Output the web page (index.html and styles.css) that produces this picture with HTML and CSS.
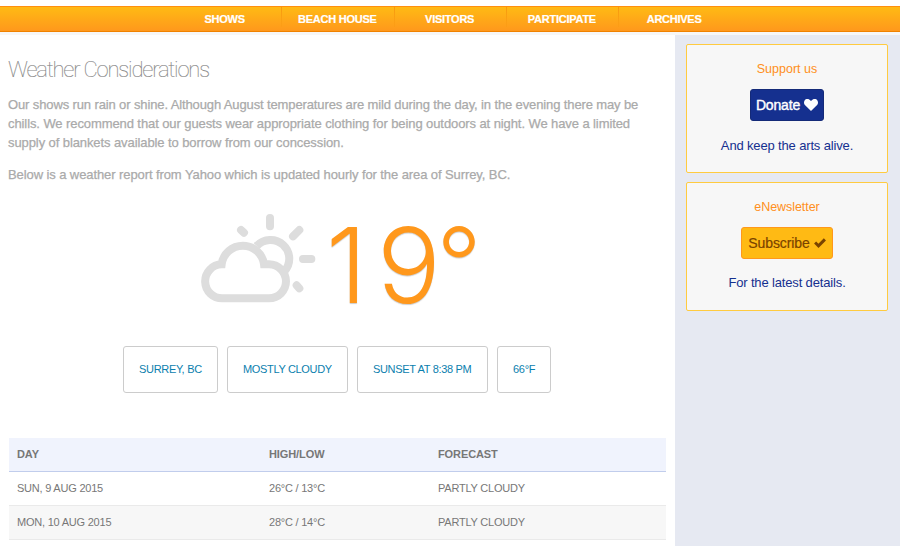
FILE: index.html
```html
<!DOCTYPE html>
<html lang="en">
<head>
<meta charset="utf-8">
<title>Weather Considerations</title>
<link rel="stylesheet" href="styles.css">
</head>
<body>
<nav class="nav">
  <a>SHOWS</a><a>BEACH HOUSE</a><a>VISITORS</a><a>PARTICIPATE</a><a>ARCHIVES</a>
</nav>
<div class="page">
  <main class="main">
    <h1>Weather Considerations</h1>
    <p class="intro">Our shows run rain or shine. Although August temperatures are mild during the day, in the evening there may be<br><span class="wide">chills. We recommend that our guests wear appropriate clothing for being outdoors at night. We have a limited<br>supply of blankets available to borrow from our concession.</span></p>
    <p class="wide">Below is a weather report from Yahoo which is updated hourly for the area of Surrey, BC.</p>
    <div class="now">
      <svg class="weather" viewBox="30 20 345 275" fill="none" stroke="#ddd" stroke-width="24">
        <path d="M95 279 H234 A51 51 0 0 0 234 177 H219 A64 64 0 0 0 92 177 A51 51 0 0 0 95 279 Z"/>
        <path d="M197 122 A56 56 0 0 1 280 198"/>
        <path stroke-linecap="round" d="M237 38V63M150 74L159 82M325 74L306 93M336 161H361M317 240L325 249"/>
      </svg>
      <span class="temp"><span class="tens">1</span><span class="ones">9</span><span class="deg">°</span></span>
    </div>
    <ul class="facts">
      <li class="place">SURREY, BC</li><li class="sky">MOSTLY CLOUDY</li><li class="sunset">SUNSET AT 8:38 PM</li><li class="fahrenheit">66°F</li>
    </ul>
    <table>
      <thead><tr><th class="day">DAY</th><th class="range">HIGH/LOW</th><th>FORECAST</th></tr></thead>
      <tbody>
        <tr><td>SUN, 9 AUG 2015</td><td>26°C / 13°C</td><td>PARTLY CLOUDY</td></tr>
        <tr><td>MON, 10 AUG 2015</td><td>28°C / 14°C</td><td>PARTLY CLOUDY</td></tr>
      </tbody>
    </table>
  </main>
  <aside class="side">
    <section class="card">
      <h2>Support us</h2>
      <a class="btn donate">Donate <svg viewBox="0 0 14 12" width="14" height="12"><path fill="#fff" d="M7 12 .9 6.1C-.3 4.8-.2 2.500 .6 1.400 2-.5 5-.5 7 2.100 9-.5 12-.5 13.400 1.400 14.200 2.500 14.300 4.800 13.100 6.100Z"/></svg></a>
      <p>And keep the arts alive.</p>
    </section>
    <section class="card second">
      <h2>eNewsletter</h2>
      <a class="btn subscribe">Subscribe <svg viewBox="0 0 12 10" width="12" height="10"><path fill="none" stroke="#7a4300" stroke-width="3" d="M1.100 4.500 4.500 7.800 10.900 1.400"/></svg></a>
      <p>For the latest details.</p>
    </section>
  </aside>
</div>
</body>
</html>
```
FILE: styles.css
```css
* { box-sizing: border-box; }
body {
  margin: 0;
  padding-top: 6px;
  height: 546px;
  overflow: hidden;
  background: #fff;
  font-family: "Liberation Sans", Arial, sans-serif;
}
.nav {
  display: flex;
  height: 26px;
  padding-left: 169px;
  border-top: 1px solid #ff8f0f;
  border-bottom: 1px solid #f08200;
  background: linear-gradient(#ffba14, #ff981c);
}
.nav a {
  width: 112.25px;
  height: 20px;
  line-height: 24px;
  text-align: center;
  font-size: 11px;
  font-weight: bold;
  color: #fff;
  letter-spacing: -0.25px;
  -webkit-text-stroke: .2px #fff;
}
.nav a:first-child { padding-right: 1px; }
.nav a + a {
  background: linear-gradient(#f7980f, rgba(247, 152, 15, .3)) left top / 1px 100% no-repeat;
}
.page {
  display: flex;
  height: 514px;
  border-top: 3px solid #f7f7f7;
}
.main { width: 675px; padding: 22px 9px 0 8px; }
h1 {
  margin: 0 0 12px;
  font: 100 22px/26px Roboto, sans-serif;
  letter-spacing: -1.19px;
  color: #888;
  -webkit-text-stroke: .15px #888;
}
.main p {
  margin: 0 0 13px;
  font-size: 13px;
  line-height: 19px;
  letter-spacing: -0.122px;
  color: #aaa;
  -webkit-text-stroke: .25px #aaa;
  white-space: nowrap;
}
.main .wide { letter-spacing: -0.09px; }
.now { display: flex; height: 119px; padding: 15px 0 0 192px; }
.weather { width: 115px; height: 91.700px; margin: 0 -.5px 0 .5px; flex: none; }
.temp {
  display: flex;
  margin: 3px 0 0 11px;
  font: 300 104px/100px "Inter", sans-serif;
  color: #ff981c;
  text-shadow: 0 1px 1px rgba(0, 0, 0, .2);
}
.tens { margin-right: 10px; }
.ones { transform: scaleX(1.02); transform-origin: left; }
.deg { margin-left: -3px; font-size: 99px; line-height: 97px; }
.facts {
  display: flex;
  gap: 9px;
  margin: 30px 0 45px 115px;
  padding: 0;
  list-style: none;
}
.facts li {
  height: 47px;
  padding: 0 15px;
  border: 1px solid #ccc;
  border-radius: 3px;
  font-size: 11px;
  line-height: 45px;
  letter-spacing: -.3px;
  color: #0b80ae;
  white-space: nowrap;
}
.facts .place { width: 95px; }
.facts .sky { width: 121px; }
.facts .sunset { width: 131px; }
.facts .fahrenheit { width: 54px; }
.facts .sky, .facts .sunset { letter-spacing: -.33px; }
table {
  width: 657px;
  margin-left: 1px;
  border-collapse: separate;
  border-spacing: 0;
  table-layout: fixed;
  font-size: 11px;
  color: #777;
}
th, td { height: 34px; padding: 0 8px 1px; text-align: left; border-bottom: 1px solid #eaeaea; letter-spacing: -.22px; }
th { background: #f0f3fd; border-color: #c1cdec; letter-spacing: -.1px; }
.day { width: 252px; }
.range { width: 169px; }
tbody tr:nth-child(even) { background: #f7f7f7; }
.side { width: 225px; padding: 9px 12px 0 11px; background: #e6e9f2; }
.card {
  height: 129px;
  margin-bottom: 9px;
  padding-top: 16px;
  border: 1px solid #ffcb40;
  border-radius: 2px;
  background: #f7f7f7;
  text-align: center;
}
.card h2 { margin: 0 0 11px; font-size: 12.500px; font-weight: normal; line-height: 17px; color: #ff8f20; }
.second h2 { letter-spacing: -.05px; }
.btn {
  display: inline-flex;
  align-items: center;
  justify-content: center;
  gap: 4px;
  height: 32px;
  border: 1px solid #142a78;
  border-radius: 3px;
  font-size: 14px;
  vertical-align: top;
}
.donate { width: 74px; background: #15308f; color: #fff; letter-spacing: -.15px; -webkit-text-stroke: .4px #fff; }
.subscribe { width: 92px; background: #ffba14; border-color: #ff981c; color: #7a4300; letter-spacing: -.1px; -webkit-text-stroke: .2px #7a4300; }
.card p { margin: 16px 0 0; font-size: 13px; line-height: 17px; letter-spacing: -.15px; color: #15308f; }
.second p { margin-top: 15px; }
```
